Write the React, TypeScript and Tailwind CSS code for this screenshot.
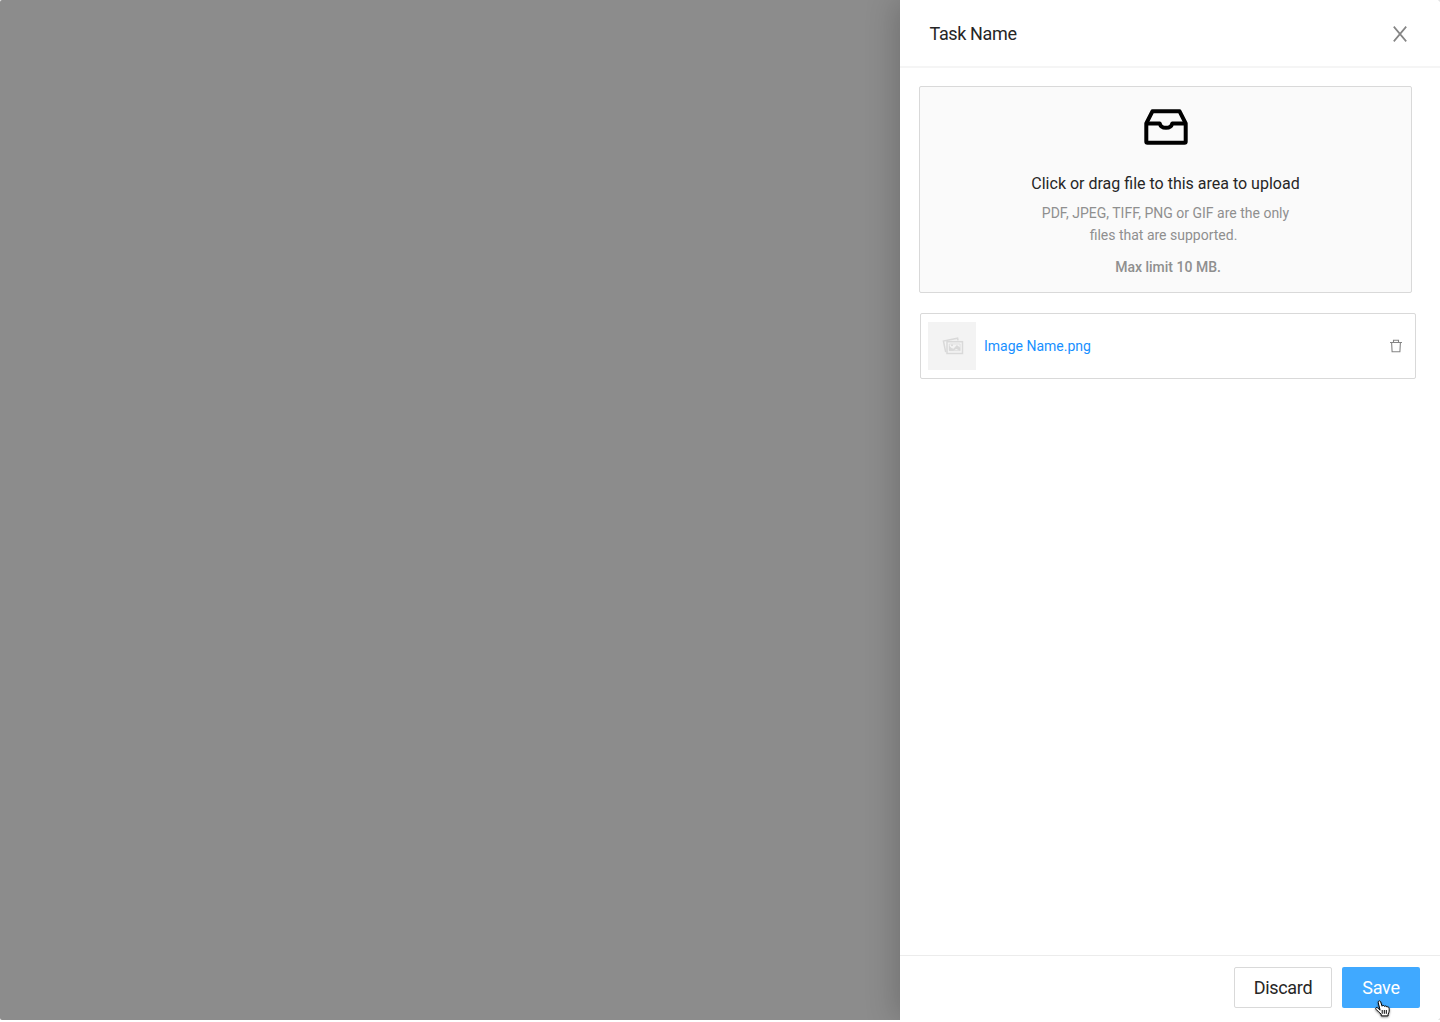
function InboxIcon() {
  return (
    <svg width="44" height="36" viewBox="0 0 44 36" fill="none" stroke="#000" strokeWidth="4" strokeLinejoin="round">
      <path d="M2.300 14.400 8.400 2.300h27.200l6.100 12.100v18.200q0 1.200-1.200 1.200h-37q-1.200 0-1.200-1.200z" />
      <path d="M2.300 14.600h13.500c.6 2.600 3 4.200 6.200 4.200s5.600-1.600 6.200-4.200h13.500" />
    </svg>
  );
}

function CloseIcon() {
  return (
    <svg width="14" height="16" viewBox="0 0 14 16" fill="none" stroke="#858585" strokeWidth="1.7">
      <path d="M.8.6 13.2 15.4M13.2.6.8 15.4" />
    </svg>
  );
}

function PicturesIcon() {
  return (
    <svg width="22" height="18" viewBox="0 0 22 18" fill="none" stroke="#d9d9d9" strokeWidth="1.5">
      <path d="M3.700 15.200 1.400 4 15.600 1.200l.4 2.200" />
      <rect x="5" y="4.700" width="15.500" height="11.800" />
      <path d="M7 13.700v-5.200l2.400 2.400 2 .8 3.500-3.600 3.300 2.600v3l-4-1.800-3 1.800z" fill="#d9d9d9" stroke="none" />
      <path d="M7.300 7h10.800v6.600H7.300z" strokeWidth=".7" />
      <circle cx="10" cy="8.200" r="1" fill="#d9d9d9" stroke="none" />
    </svg>
  );
}

function TrashIcon() {
  return (
    <svg width="12" height="14" viewBox="0 0 12 14" fill="none" stroke="#858585" strokeWidth="1.1">
      <path d="M0 3.5h12M3.5 3.500v-2.200h5v2.200M1.600 3.500l.5 9.200h7.800l.5-9.200" />
    </svg>
  );
}

function HandCursor() {
  return (
    <svg
      className="absolute left-[33px] top-[33px] drop-shadow-[0_1px_1px_rgba(0,0,0,0.45)]"
      width="15"
      height="17"
      viewBox="0 0 15 17"
      fill="#fff"
      stroke="#000"
      strokeWidth="1"
      strokeLinejoin="round"
    >
      <path d="M5.100 10.200 3.300 3C2.800.7 5 .1 5.700 2L7.100 6.200c.4-1.100 2.100-.9 2.400.2.6-.8 2.100-.5 2.300.6.9-.5 2.200 0 2.300 1.200.3 2.300.1 3.900-1 6v1.700H6.200v-1.700C4.600 12.800 2.600 11.100.9 9.200.1 8 1.500 6.900 2.700 7.900z" />
      <path d="M7.200 10v3.800M9.300 10v3.800M11.300 10v3.800" />
    </svg>
  );
}

export default function App() {
  return (
    <div className="h-[1022px] w-[1440px] overflow-hidden bg-white font-['Roboto',sans-serif] text-[#262626]">
      <div className="flex h-[1020px] justify-end overflow-hidden rounded-[2px] bg-[#8c8c8c]">
        <aside className="flex w-[540px] flex-col bg-white shadow-[-4px_0_30px_rgba(0,0,0,0.2)]">
          <header className="flex h-[68px] shrink-0 items-center justify-between border-b-2 border-[#f5f5f5] pl-[29.5px] pr-[33px] pt-[2px]">
            <h1 className="text-[18px] leading-[26px] tracking-[-0.36px]">Task Name</h1>
            <button aria-label="Close">
              <CloseIcon />
            </button>
          </header>

          <main className="flex-1 pl-[19px] pt-[18px]">
            <section className="flex h-[207px] w-[493px] flex-col items-center rounded-[2px] border border-[#d9d9d9] bg-[#fafafa] pt-[22px] text-center">
              <InboxIcon />
              <p className="mt-[27px] text-[16px] leading-6">Click or drag file to this area to upload</p>
              <p className="mt-[6px] text-[14px] leading-[22px] text-[#8f8f8f]">
                PDF, JPEG, TIFF, PNG or GIF are the only
                <br />
                <span className="-ml-1">files that are supported.</span>
              </p>
              <p className="ml-[5px] mt-[10px] text-[14px] font-medium leading-[22px] text-[#8f8f8f]">Max limit 10 MB.</p>
            </section>

            <section className="ml-px mt-5 flex h-[66px] w-[496px] items-center rounded-[2px] border border-[#d9d9d9] pl-[7px] pr-[13px]">
              <div className="flex size-12 items-center justify-center bg-[#f3f3f3] pl-[2px]">
                <PicturesIcon />
              </div>
              <a className="ml-2 text-[14px] leading-[22px] text-[#1890ff]">Image Name.png</a>
              <button aria-label="Delete" className="ml-auto">
                <TrashIcon />
              </button>
            </section>
          </main>

          <footer className="flex h-[65px] shrink-0 justify-end gap-[10px] border-t border-[#ececec] pr-5 pt-[11px] text-[18px] tracking-[-0.3px]">
            <button className="h-[41px] w-[98px] rounded-[2px] border border-[#d9d9d9]">Discard</button>
            <button className="relative h-[41px] w-[78px] rounded-[2px] bg-[#40a9ff] text-white">
              Save
              <HandCursor />
            </button>
          </footer>
        </aside>
      </div>
    </div>
  );
}
